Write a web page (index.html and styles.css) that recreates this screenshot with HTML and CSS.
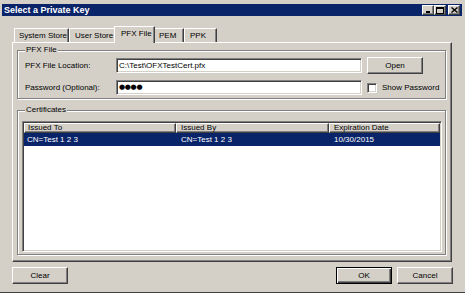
FILE: index.html
```html
<!DOCTYPE html>
<html>
<head>
<meta charset="utf-8">
<link rel="stylesheet" href="styles.css">
</head>
<body>
<div class="dialog">
  <div class="titlebar">
    <span class="title">Select a Private Key</span>
    <div class="caption-buttons">
      <span class="cap-btn"><svg width="7" height="6" viewBox="0 0 7 6"><rect x="1" y="4" width="4" height="2" fill="#000"/></svg></span>
      <span class="cap-btn"><svg width="8" height="7" viewBox="0 0 8 7"><rect x="0.5" y="0.5" width="7" height="6" fill="none" stroke="#000"/><rect x="0" y="0" width="8" height="2" fill="#000"/></svg></span>
      <span class="cap-btn close"><svg width="7" height="6" viewBox="0 0 7 6"><path d="M0.5 0.5L6.5 5.5M6.5 0.5L0.5 5.5" stroke="#000" stroke-width="1.4"/></svg></span>
    </div>
  </div>
  <div class="tabs">
    <div class="tab t-system">System Store</div>
    <div class="tab t-user">User Store</div>
    <div class="tab t-pfx active">PFX File</div>
    <div class="tab t-pem">PEM</div>
    <div class="tab t-ppk">PPK</div>
  </div>
  <div class="panel">
    <div class="group g-pfx">
      <div class="group-title">PFX File</div>
      <div class="form">
        <label class="lbl">PFX File Location:</label>
        <div class="field">C:\Test\OFXTestCert.pfx</div>
        <div class="btn">Open</div>
        <label class="lbl">Password (Optional):</label>
        <div class="field pw">●●●●</div>
        <div class="check"><span class="box"></span><span>Show Password</span></div>
      </div>
    </div>
    <div class="group g-certs">
      <div class="group-title">Certificates</div>
      <div class="list">
        <div class="lv-header">
          <div class="hcell c1">Issued To</div>
          <div class="hcell">Issued By</div>
          <div class="hcell">Expiration Date</div>
        </div>
        <div class="lv-row selected">
          <div class="cell c1">CN=Test 1 2 3</div>
          <div class="cell">CN=Test 1 2 3</div>
          <div class="cell">10/30/2015</div>
        </div>
      </div>
    </div>
  </div>
  <div class="footer">
    <div class="btn">Clear</div>
    <div class="spacer"></div>
    <div class="btn default">OK</div>
    <div class="btn">Cancel</div>
  </div>
</div>
<div class="behind"></div>
</body>
</html>
```
FILE: styles.css
```css
* { box-sizing: border-box; margin: 0; padding: 0; }
html, body { width: 465px; height: 297px; overflow: hidden; }
body {
  background: #fff;
  font-family: "Liberation Sans", Arial, sans-serif;
  font-size: 8px;
  color: #000;
}
.dialog {
  height: 293px;
  background: #d4d0c8;
  border-bottom: 1px solid #404040;
  padding-top: 4px;
  display: flex;
  flex-direction: column;
}
.titlebar {
  height: 12px;
  margin: 0 3px 0 2px;
  background: #0a246a;
  color: #fff;
  display: flex;
  align-items: center;
  justify-content: space-between;
  padding: 0 2px 0 2px;
}
.title { font-weight: bold; font-size: 9px; line-height: 12px; }
.caption-buttons { display: flex; }
.cap-btn {
  width: 12px;
  height: 10px;
  background: #d4d0c8;
  border: 1px solid;
  border-color: #fff #404040 #404040 #fff;
  box-shadow: inset -1px -1px #808080;
  display: flex;
  align-items: center;
  justify-content: center;
}
.cap-btn svg { display: block; }
.cap-btn.close { margin-left: 2px; }

.tabs {
  display: flex;
  align-items: flex-end;
  height: 16px;
  margin-top: 10px;
  padding-left: 14px;
  position: relative;
  z-index: 1;
}
.tab {
  height: 14px;
  line-height: 13px;
  padding-left: 5px;
  border: 1px solid;
  border-bottom: 0;
  border-color: #fff #404040 #fff #fff;
  box-shadow: inset -1px 0 #808080;
  background: #d4d0c8;
  white-space: nowrap;
}
.t-system { width: 55px; padding-left: 4px; }
.t-user { width: 47px; }
.t-pfx { width: 37px; }
.t-pem { width: 31px; }
.t-ppk { width: 33px; }
.tab.active {
  position: relative;
  z-index: 2;
  height: 17px;
  margin: 0 -2px -1px -2px;
  width: 41px;
  padding-left: 6px;
}

.panel {
  height: 220px;
  margin: 0 13px 0 12px;
  border: 1px solid;
  border-color: #fff #404040 #404040 #fff;
  box-shadow: inset -1px -1px #808080;
  padding: 7px 5px 0 4px;
  display: flex;
  flex-direction: column;
}
.group {
  border: 1px solid #808080;
  box-shadow: inset 1px 1px #fff, 1px 1px #fff;
  display: flex;
  flex-direction: column;
}
.group-title {
  align-self: flex-start;
  line-height: 10px;
  margin: -6px 0 0 7px;
  padding: 0 1px;
  background: #d4d0c8;
}
.g-pfx { padding-bottom: 3px; }
.g-certs { margin-top: 11px; }

.form {
  display: grid;
  grid-template-columns: 86px 246px 56px;
  grid-template-rows: 17px 15px;
  column-gap: 5px;
  row-gap: 6px;
  align-items: center;
  margin: 2px 0 0 7px;
}
.lbl { white-space: nowrap; }
.field {
  height: 15px;
  background: #fff;
  border: 1px solid;
  border-color: #808080 #fff #fff #808080;
  box-shadow: inset 1px 1px #404040, inset -1px -1px #d4d0c8;
  padding-left: 2px;
  line-height: 13px;
  white-space: nowrap;
  overflow: hidden;
}
.field.pw { font-family: "DejaVu Sans", sans-serif; font-size: 7px; letter-spacing: -0.3px; }
.btn {
  width: 56px;
  height: 17px;
  border: 1px solid;
  border-color: #fff #404040 #404040 #fff;
  box-shadow: inset -1px -1px #808080;
  text-align: center;
  line-height: 15px;
  background: #d4d0c8;
}
.btn.default {
  border: 1px solid #000;
  box-shadow: inset 1px 1px #fff, inset -1px -1px #404040, inset -2px -2px #808080;
}
.check { display: flex; align-items: center; gap: 5px; white-space: nowrap; }
.box {
  flex: 0 0 10px;
  width: 10px;
  height: 10px;
  background: #fff;
  border: 1px solid;
  border-color: #808080 #fff #fff #808080;
  box-shadow: inset 1px 1px #404040, inset -1px -1px #d4d0c8;
}

.list {
  width: 420px;
  height: 131px;
  margin: 6px 0 2px 4px;
  background: #fff;
  border: 1px solid;
  border-color: #808080 #fff #fff #808080;
  box-shadow: inset 1px 1px #404040, inset -1px -1px #d4d0c8;
  padding: 1px;
}
.lv-header, .lv-row {
  display: grid;
  grid-template-columns: 152px 153px 1fr;
}
.lv-header { height: 10px; }
.hcell {
  background: #d4d0c8;
  border: 1px solid;
  border-color: #fff #404040 #404040 #fff;
  box-shadow: inset -1px -1px #808080;
  padding-left: 4px;
  line-height: 8px;
  white-space: nowrap;
}
.hcell.c1 { padding-left: 3px; }
.lv-row { height: 13px; line-height: 13px; }
.lv-row.selected { background: #0a246a; color: #fff; }
.cell { padding-left: 5px; white-space: nowrap; }
.cell.c1 { padding-left: 3px; }

.footer {
  display: flex;
  gap: 5px;
  margin-top: 5px;
  padding: 0 12px;
}
.spacer { flex: 1; }
.behind { height: 4px; background: #fff; }
```
